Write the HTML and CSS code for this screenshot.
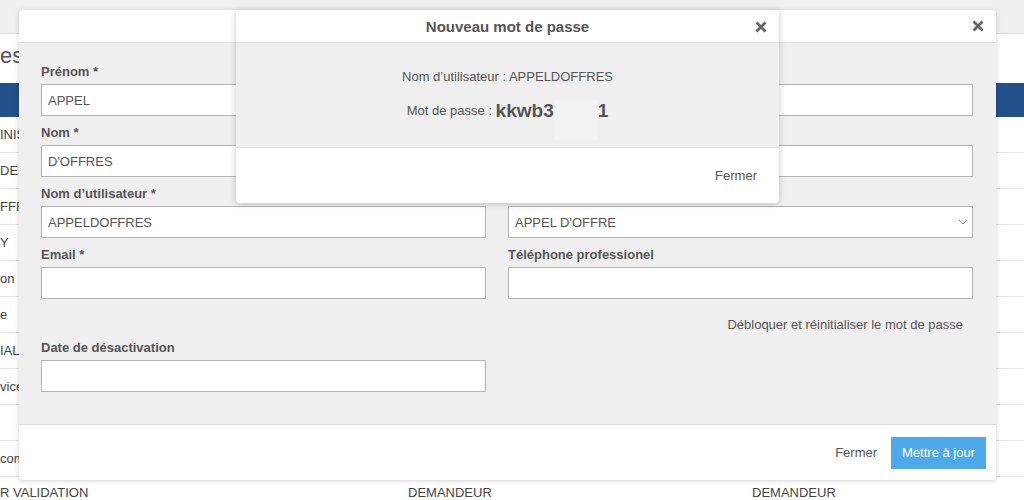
FILE: index.html
```html
<!doctype html>
<html lang="fr">
  <head>
    <meta charset="UTF-8" />
    <meta name="viewport" content="width=device-width, initial-scale=1.0" />
    <title>Utilisateurs</title>
    <link rel="stylesheet" href="styles.css">
  </head>
  <body>
    <!-- page behind the dialogs (scrolled to the right) -->
    <div class="page">
      <div class="topbar"></div>
      <h1 class="page-title">es</h1>
      <div class="list-head"></div>
      <div class="list-row">INIS</div>
      <div class="list-row">DES</div>
      <div class="list-row">FFR</div>
      <div class="list-row">Y</div>
      <div class="list-row">on</div>
      <div class="list-row">e</div>
      <div class="list-row">IAL</div>
      <div class="list-row">vice</div>
      <div class="list-row"></div>
      <div class="list-row">com</div>
      <div class="list-foot">
        <span>R VALIDATION</span>
        <span>DEMANDEUR</span>
        <span>DEMANDEUR</span>
      </div>
    </div>

    <!-- edit user dialog -->
    <div class="modal">
      <div class="modal-header">
        <button class="close" title="Fermer">
          <svg width="12" height="12" viewBox="0 0 12 12"><path d="M1.5 1.5l9 9M10.5 1.5l-9 9" /></svg>
        </button>
      </div>
      <div class="modal-body">
        <div class="col">
          <div class="field">
            <label>Prénom *</label>
            <input type="text" value="APPEL">
          </div>
          <div class="field">
            <label>Nom *</label>
            <input type="text" value="D'OFFRES">
          </div>
          <div class="field">
            <label>Nom d’utilisateur *</label>
            <input type="text" value="APPELDOFFRES">
          </div>
          <div class="field">
            <label>Email *</label>
            <input type="text" value="">
          </div>
          <div class="field field-late">
            <label>Date de désactivation</label>
            <input type="text" value="">
          </div>
        </div>
        <div class="col">
          <div class="field">
            <label>&nbsp;</label>
            <input type="text" value="">
          </div>
          <div class="field">
            <label>&nbsp;</label>
            <input type="text" value="">
          </div>
          <div class="field">
            <label>&nbsp;</label>
            <div class="select">
              <select>
                <option>APPEL D'OFFRE</option>
              </select>
              <svg class="chevron" width="10" height="6" viewBox="0 0 10 6"><path d="M1 1l4 4 4-4" /></svg>
            </div>
          </div>
          <div class="field">
            <label>Téléphone professionel</label>
            <input type="text" value="">
          </div>
          <a class="reset-link" href="#">Débloquer et réinitialiser le mot de passe</a>
        </div>
      </div>
      <div class="modal-footer">
        <button class="btn-link">Fermer</button>
        <button class="btn-primary">Mettre à jour</button>
      </div>
    </div>

    <!-- new password dialog -->
    <div class="popup">
      <div class="popup-header">
        Nouveau mot de passe
        <button class="close" title="Fermer">
          <svg width="12" height="12" viewBox="0 0 12 12"><path d="M1.5 1.5l9 9M10.5 1.5l-9 9" /></svg>
        </button>
      </div>
      <div class="popup-body">
        <p>Nom d’utilisateur : APPELDOFFRES</p>
        <p class="password">Mot de passe :&nbsp;<strong>kkwb3</strong><span class="hidden-part"></span><strong>1</strong></p>
      </div>
      <div class="popup-footer">
        <button class="btn-link">Fermer</button>
      </div>
    </div>
  </body>
</html>
```

FILE: styles.css
```css
body {
  margin: 0;
  background: #fff;
  font-family: "Liberation Sans", Arial, sans-serif;
  font-size: 13px;
  color: #555;
  overflow: hidden;
}

/* background page */
.topbar {
  height: 33px;
  background: #efefef;
  border-bottom: 1px solid #dedede;
}
.page-title {
  margin: 0;
  height: 49px;
  line-height: 44px;
  font-size: 22px;
  font-weight: normal;
  color: #555;
}
.list-head {
  height: 34px;
  background: #22508a;
}
.list-row {
  height: 36px;
  box-sizing: border-box;
  border-bottom: 1px solid #e4e4e4;
  line-height: 36px;
  color: #444;
  white-space: nowrap;
}
.list-foot {
  display: grid;
  grid-template-columns: 408px 344px 1fr;
  height: 30px;
  line-height: 32px;
  color: #444;
}

/* edit dialog */
.modal {
  position: absolute;
  left: 19px;
  top: 10px;
  width: 977px;
  background: #fff;
  border-radius: 4px;
  box-shadow: 0 1px 5px rgba(0, 0, 0, 0.18);
  overflow: hidden;
}
.modal-header {
  height: 33px;
  box-sizing: border-box;
  border-bottom: 1px solid #dcdcdc;
  display: flex;
  justify-content: flex-end;
  align-items: center;
  padding-right: 11px;
}
.close {
  border: 0;
  background: none;
  padding: 0;
  width: 14px;
  height: 14px;
  display: flex;
  align-items: center;
  justify-content: center;
  cursor: pointer;
}
.close path {
  stroke: #666;
  stroke-width: 2.8;
  fill: none;
}
.modal-body {
  background: #efefef;
  display: grid;
  grid-template-columns: 445px 465px;
  column-gap: 22px;
  padding: 20px 23px 32px 22px;
}
.col {
  display: flex;
  flex-direction: column;
  gap: 8px;
}
.field {
  display: flex;
  flex-direction: column;
}
.field label {
  font-weight: bold;
  line-height: 18px;
  margin-bottom: 3px;
}
.field-late {
  margin-top: 32px;
}
.field input,
.select select {
  height: 32px;
  box-sizing: border-box;
  border: 1px solid #b4b4b4;
  background: #fff;
  padding: 0 6px;
  font-family: inherit;
  font-size: 13px;
  color: #555;
  border-radius: 0;
  outline: none;
}
.select {
  position: relative;
}
.select select {
  width: 100%;
  appearance: none;
  -webkit-appearance: none;
}
.chevron {
  position: absolute;
  right: 5px;
  top: 13px;
}
.chevron path {
  stroke: #888;
  stroke-width: 1;
  fill: none;
}
.reset-link {
  margin-top: 9px;
  line-height: 18px;
  text-align: right;
  padding-right: 10px;
  color: #555;
  text-decoration: none;
}
.modal-footer {
  height: 56px;
  box-sizing: border-box;
  border-top: 1px solid #dcdcdc;
  display: flex;
  justify-content: flex-end;
  align-items: center;
  gap: 14px;
  padding-right: 10px;
}
.btn-link {
  border: 0;
  background: none;
  padding: 0;
  font-family: inherit;
  font-size: 13px;
  color: #555;
  cursor: pointer;
}
.btn-primary {
  border: 0;
  height: 32px;
  padding: 0 11px;
  background: #4ea9ea;
  color: #fff;
  font-family: inherit;
  font-size: 13px;
  cursor: pointer;
}

/* new password dialog */
.popup {
  position: absolute;
  left: 236px;
  top: 10px;
  width: 543px;
  background: #fff;
  border-radius: 4px;
  box-shadow: 0 1px 6px rgba(0, 0, 0, 0.22);
  overflow: hidden;
}
.popup-header {
  position: relative;
  height: 33px;
  box-sizing: border-box;
  border-bottom: 1px solid #dcdcdc;
  line-height: 33px;
  text-align: center;
  font-size: 15px;
  font-weight: bold;
  color: #555;
}
.popup-header .close {
  position: absolute;
  right: 11px;
  top: 10px;
}
.popup-body {
  height: 105px;
  box-sizing: border-box;
  background: #efefef;
  border-bottom: 1px solid #dcdcdc;
  padding-top: 25px;
  text-align: center;
}
.popup-body p {
  margin: 0;
  line-height: 18px;
}
.password {
  margin-top: 13px !important;
  height: 24px;
  display: flex;
  justify-content: center;
  align-items: center;
}
.password strong {
  font-size: 19px;
  line-height: 24px;
}
.hidden-part {
  width: 44px;
  height: 40px;
  margin-top: 18px;
  background: #f2f2f2;
}
.popup-footer {
  height: 55px;
  display: flex;
  justify-content: flex-end;
  align-items: center;
  padding-right: 22px;
}
```
